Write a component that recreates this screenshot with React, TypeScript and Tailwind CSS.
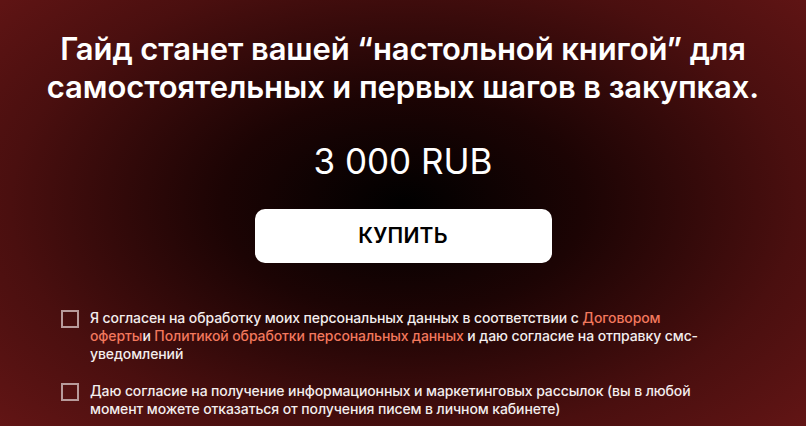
import { useState } from "react";

function Consent({ children }: { children: React.ReactNode }) {
    const [checked, setChecked] = useState(false);
    return (
        <label className="flex items-start gap-[11px] cursor-pointer">
            <span
                onClick={() => setChecked(!checked)}
                className="mt-[1px] w-[18px] h-[18px] shrink-0 border-2 border-[#b89b9b] flex items-center justify-center"
            >
                {checked && <span className="w-[8px] h-[8px] bg-white" />}
            </span>
            <span className="text-[14px] leading-[18px] font-medium tracking-[-0.1px] text-[#f3eded]">{children}</span>
        </label>
    );
}

export default function App() {
    return (
        <div
            className="w-[806px] h-[426px] overflow-hidden flex flex-col items-center text-white bg-[radial-gradient(ellipse_75%_85%_at_50%_48%,#000000_0%,#1c0404_30%,#4a0f0f_65%,#6b1717_100%)]"
            style={{ fontFamily: "Inter, 'Noto Sans', sans-serif" }}
        >
            {/* headline */}
            <h1 className="mt-[30px] text-center text-[31px] leading-[38px] font-semibold tracking-[-0.1px]">
                Гайд станет вашей “настольной книгой” для
                <br />
                самостоятельных и первых шагов в закупках.
            </h1>

            {/* price */}
            <div className="mt-[34px] text-[35px] leading-[42px] font-normal">3 000 RUB</div>

            {/* buy button */}
            <button className="mt-[27px] w-[297px] h-[54px] rounded-[10px] bg-white text-black text-[21px] font-semibold tracking-[0.2px] cursor-pointer">
                КУПИТЬ
            </button>

            {/* consents */}
            <div className="mt-[46px] w-[684px] pr-[33px] flex flex-col gap-[19px]">
                <Consent>
                    Я согласен на обработку моих персональных данных в соответствии с{" "}
                    <a className="text-[#f2785d]">Договором оферты</a>и{" "}
                    <a className="text-[#f2785d]">Политикой обработки персональных данных</a> и даю согласие
                    на отправку смс-уведомлений
                </Consent>
                <Consent>
                    Даю согласие на получение информационных и маркетинговых рассылок (вы в любой момент можете
                    отказаться от получения писем в личном кабинете)
                </Consent>
            </div>
        </div>
    );
}
